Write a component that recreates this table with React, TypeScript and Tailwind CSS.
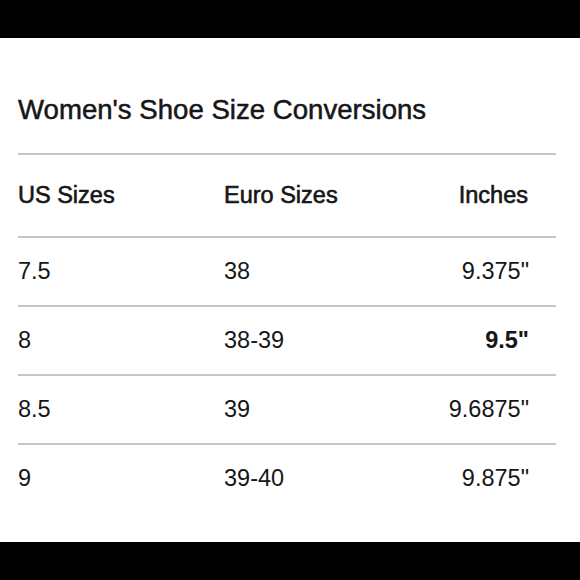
import React from "react";

const rows: { us: string; eu: string; inch: string; bold?: boolean }[] = [
  { us: "7.5", eu: "38", inch: '9.375"' },
  { us: "8", eu: "38-39", inch: '9.5"', bold: true },
  { us: "8.5", eu: "39", inch: '9.6875"' },
  { us: "9", eu: "39-40", inch: '9.875"' },
];

export default function App() {
  return (
    <div
      className="w-[580px] h-[580px] flex flex-col bg-black text-[#161616]"
      style={{ fontFamily: '"Liberation Sans", Arial, sans-serif' }}
    >
      <div className="h-[38px] shrink-0" />
      <div className="flex-1 bg-white pl-[18px] pr-[24px] flex flex-col">
        <div className="pt-[58px] h-[115px] text-[27.6px] leading-none [-webkit-text-stroke:0.5px_#161616]">
          Women's Shoe Size Conversions
        </div>
        <div className="border-t-2 border-[#c6c6c6] h-[83px] flex items-center text-[23.5px] leading-none [-webkit-text-stroke:0.6px_#161616]">
          <div className="w-[206px]">US Sizes</div>
          <div className="flex-1">Euro Sizes</div>
          <div className="pr-[28px] text-right">Inches</div>
        </div>
        {rows.map((r) => (
          <div
            key={r.us}
            className="border-t-2 border-[#c6c6c6] h-[69px] flex items-center text-[23.5px] leading-none"
          >
            <div className="w-[206px]">{r.us}</div>
            <div className="flex-1">{r.eu}</div>
            <div className={r.bold ? "pr-[27px] text-right font-bold" : "pr-[27px] text-right"}>
              {r.inch}
            </div>
          </div>
        ))}
      </div>
      <div className="h-[38px] shrink-0" />
    </div>
  );
}
